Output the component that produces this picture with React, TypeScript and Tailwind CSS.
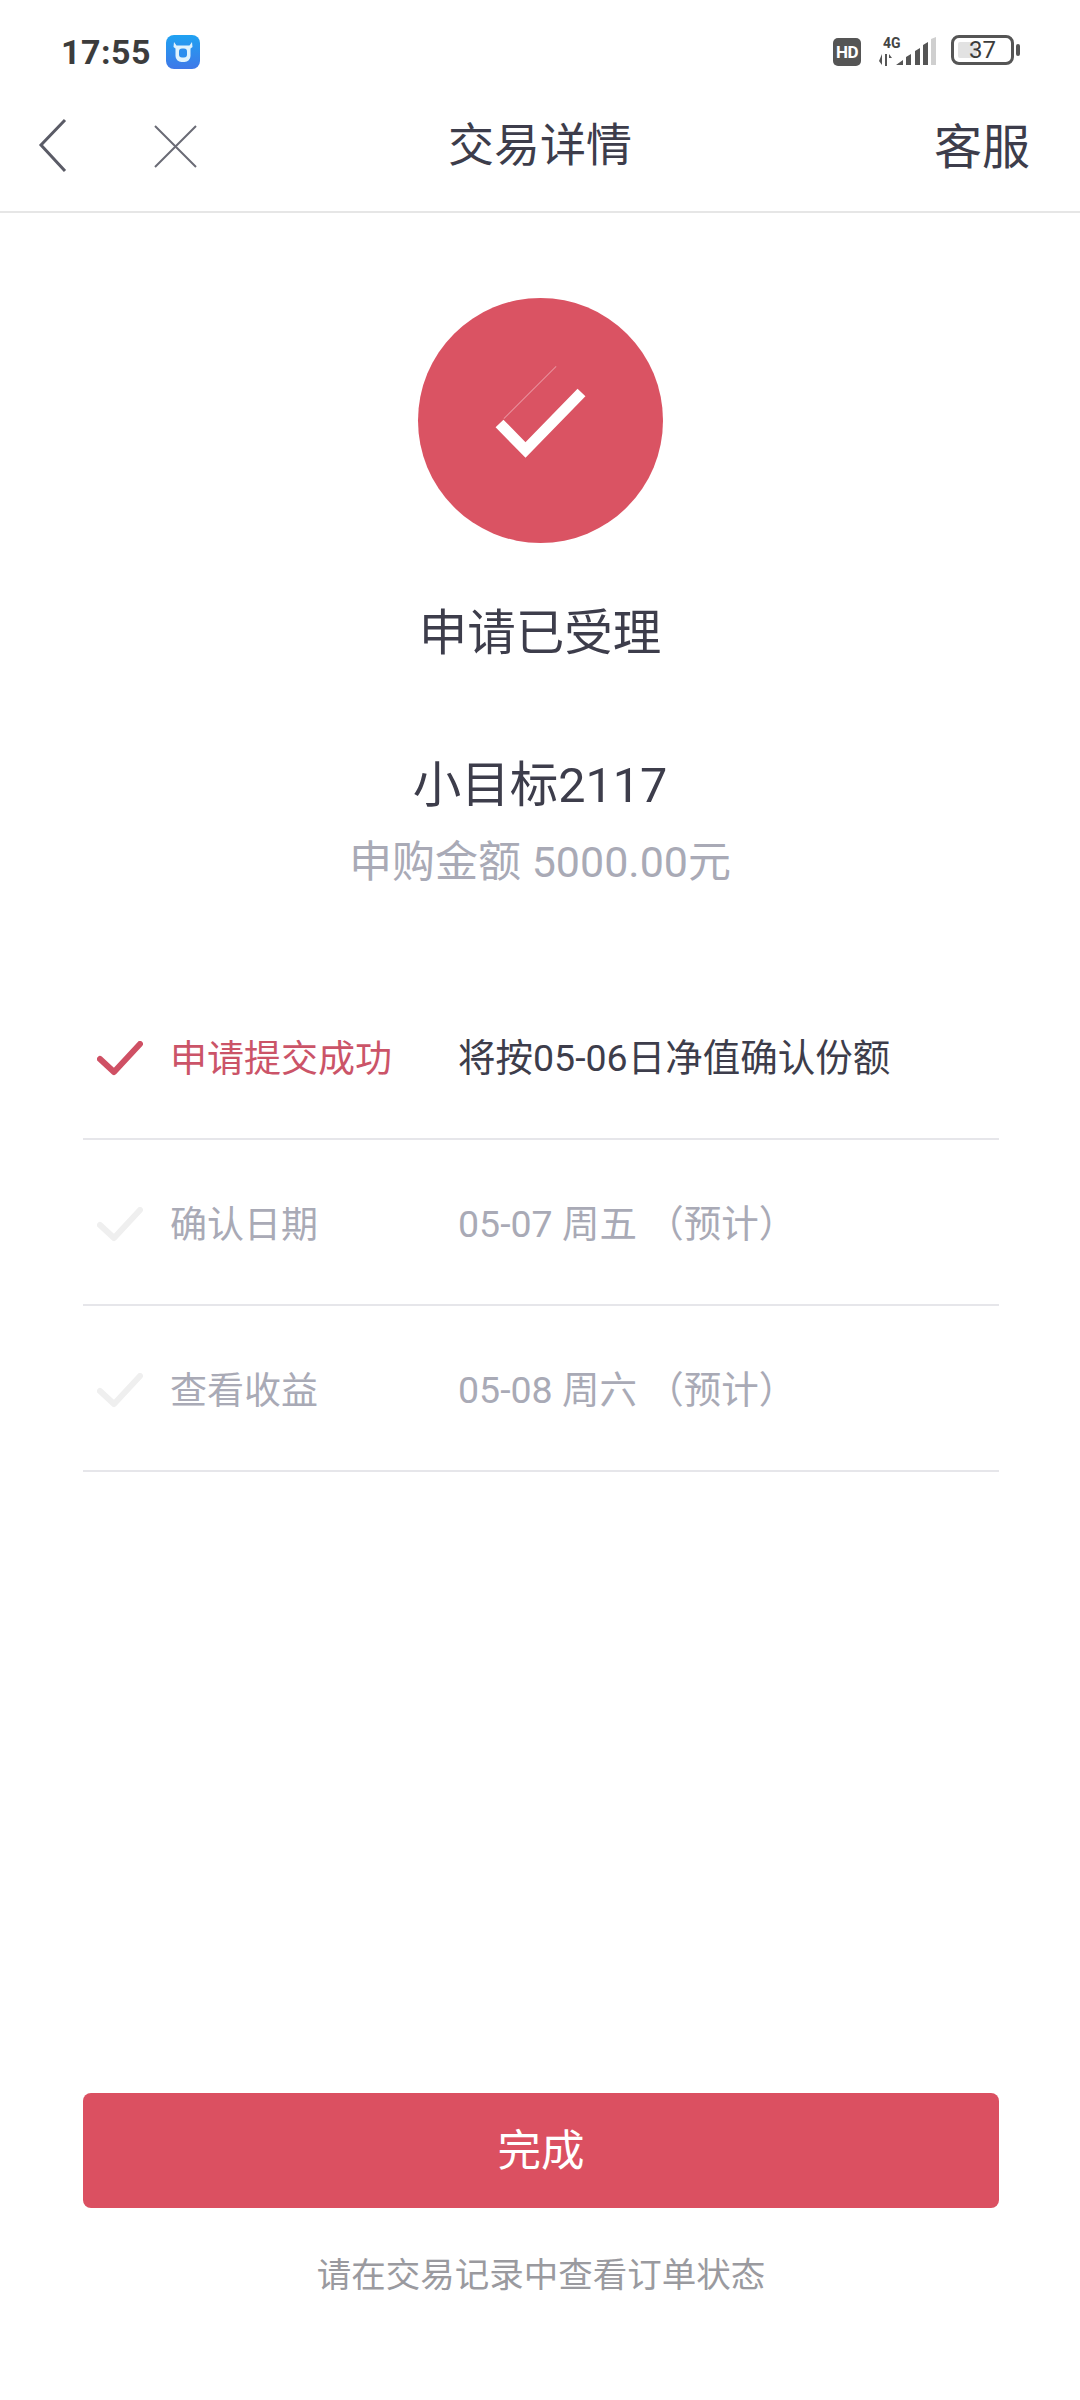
// App.tsx
import React from "react";

const FONT = "font-['Roboto','Noto_Sans_CJK_SC',sans-serif]";

/* ---------- Data ---------- */
const STEPS = [
  { id: "s1", label: "申请提交成功", value: "将按05-06日净值确认份额", active: true },
  { id: "s2", label: "确认日期", value: "05-07 周五 （预计）", active: false },
  { id: "s3", label: "查看收益", value: "05-08 周六 （预计）", active: false },
];

/* ---------- Status bar ---------- */
const CowIcon = () => (
  <svg width="34" height="34" viewBox="0 0 34 34" className="ml-[15px]">
    <defs>
      <linearGradient id="cow" x1="0" y1="0" x2="0" y2="1">
        <stop offset="0" stopColor="#1fa2f2" />
        <stop offset="1" stopColor="#3f78e8" />
      </linearGradient>
    </defs>
    <rect width="34" height="34" rx="8" fill="url(#cow)" />
    <path d="M8 7l2.500 3.500h13L26 7l.5 5-2 1.500V21a6 6 0 0 1-6 6h-3a6 6 0 0 1-6-6v-7.500l-2-1.500z" fill="#dff3fd" />
    <rect x="13" y="13.500" width="8" height="9" rx="3" fill="#2b8eee" />
  </svg>
);

const SignalIcon = () => (
  <svg width="58" height="30" viewBox="0 0 58 30">
    <path d="M3 17v11l-3-4zM6 17h2v12H6zM10 17l3 4h-3z" fill="#555" />
    <path d="M17 28l7-5v5zM27 20l5-3v11h-5zM36 14l5-3v17h-5zM44 8l5-3v23h-5z" fill="#555" />
    <path d="M52 2l5-2v28h-5z" fill="#cfcfcf" />
  </svg>
);

const StatusBar = () => (
  <div className="h-[69px] pt-[35px] pl-[61px] pr-[60px] flex items-start justify-between">
    <div className="flex items-center h-[34px]">
      <span className="text-[34px] leading-none font-bold text-[#3c3c3c] font-['Roboto',sans-serif] tracking-[0.5px]">17:55</span>
      <CowIcon />
    </div>
    <div className="flex items-start">
      <div className="w-[28px] h-[28px] mt-[3px] rounded-[5px] bg-[#555] text-white text-[17px] font-bold leading-[28px] text-center font-['Roboto',sans-serif] tracking-[-0.5px]">
        HD
      </div>
      <div className="relative w-[58px] h-[30px] ml-[18px] mt-[2px]">
        <span className="absolute left-[4px] -top-[1px] text-[14px] leading-none font-bold text-[#444] font-['Roboto',sans-serif]">4G</span>
        <SignalIcon />
      </div>
      <div className="ml-[14px] flex items-center">
        <div className="relative w-[63px] h-[30px] rounded-[8px] border-[3px] border-[#555] flex items-center justify-center">
          <div className="absolute left-[4px] top-[4px] w-[19px] h-[16px] bg-[#e2e2e2] rounded-[2px]" />
          <span className="relative text-[24px] leading-none text-[#3c3c3c] font-['Roboto',sans-serif]">37</span>
        </div>
        <div className="ml-[2px] w-[4px] h-[12px] rounded-[2px] bg-[#555]" />
      </div>
    </div>
  </div>
);

/* ---------- Nav ---------- */
const NavBar = () => (
  <div className="relative h-[144px] border-b-2 border-[#e6e6e6] flex items-center justify-center pt-[10px]">
    <svg width="30" height="56" viewBox="0 0 30 56" className="absolute left-[38px] top-[49px]" fill="none" stroke="#5a5b66" strokeWidth="3">
      <path d="M27 2 L3 27 L27 53" />
    </svg>
    <svg width="44" height="44" viewBox="0 0 44 44" className="absolute left-[154px] top-[56px]" fill="none" stroke="#6a6b75" strokeWidth="2">
      <path d="M1 1 L42 42 M42 1 L1 42" />
    </svg>
    <span className="text-[46px] leading-none text-[#3d3d4b]">交易详情</span>
    <span className="absolute right-[50px] top-[55px] text-[48px] leading-none text-[#3d3d4b]">客服</span>
  </div>
);

/* ---------- Step row ---------- */
const StepRow = ({ label, value, active }: { label: string; value: string; active: boolean }) => (
  <div className="h-[166px] pt-[6px] border-b-2 border-[#e6e6ea] flex items-center">
    <svg width="46" height="36" viewBox="0 0 46 36" className="ml-[14px]" fill="none" stroke={active ? "#cf5064" : "#efefef"} strokeWidth="6" strokeLinecap="round" strokeLinejoin="round">
      <path d="M3 18 L17 31 L43 3" />
    </svg>
    <span className={`ml-[27px] w-[288px] text-[37px] leading-none ${active ? "text-[#cb5468]" : "text-[#a9aab6]"}`}>{label}</span>
    <span className={`text-[37.500px] leading-none ${active ? "text-[#3d3d4b]" : "text-[#a9aab6]"}`}>{value}</span>
  </div>
);

/* ---------- Page ---------- */
export default function App() {
  return (
    <div className={`w-[1080px] h-[2400px] bg-white flex flex-col ${FONT}`}>
      <StatusBar />
      <NavBar />

      <div className="flex flex-col items-center">
        <div className="relative mt-[85px] w-[245px] h-[245px] rounded-full bg-[#da5363] flex items-center justify-center">
          <svg width="92" height="80" viewBox="0 0 92 80" className="mb-[2px]" fill="none" stroke="#fff" strokeWidth="11">
            <path d="M5.500 43.500 L31.500 70 L87.500 12.500" />
          </svg>
          {/* faint seam above the tick */}
          <div className="absolute left-[75px] top-[94px] w-[74px] h-px bg-[#e8919c] -rotate-45" />
        </div>
        <div className="mt-[66px] text-[48.500px] leading-[50px] text-[#3d3d4b]">申请已受理</div>
        <div className="mt-[102px] text-[48.500px] leading-[50px] text-[#3d3d4b]">小目标2117</div>
        <div className="mt-[26px] text-[43px] leading-[50px] text-[#a9aab6]">申购金额 5000.00元</div>
      </div>

      <div className="ml-[83px] mr-[81px] mt-[87px]">
        {STEPS.map((s) => (
          <StepRow key={s.id} label={s.label} value={s.value} active={s.active} />
        ))}
      </div>

      <div className="ml-[83px] mr-[81px] mt-auto mb-[102px] flex flex-col items-center">
        <div className="w-full h-[115px] pt-[3px] rounded-[8px] bg-[#db5061] flex items-center justify-center text-[43.500px] leading-none text-white">完成</div>
        <div className="mt-[44px] text-[34.500px] leading-[46px] text-[#9a9a9f]">请在交易记录中查看订单状态</div>
      </div>
    </div>
  );
}
